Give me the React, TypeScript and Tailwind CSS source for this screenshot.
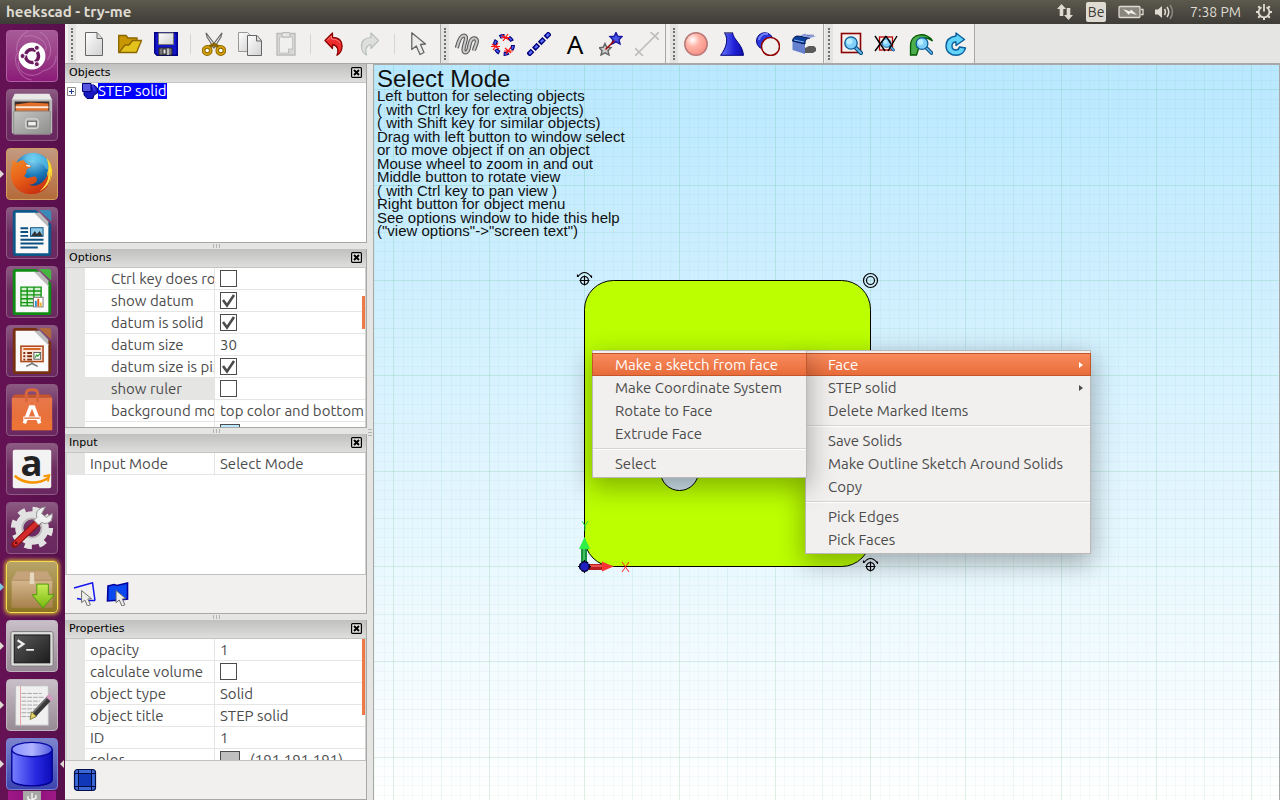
import React from "react";

type Children = { children?: React.ReactNode };

/* ---------- toolbar icons (24 x 24) ---------- */

function Icon({ children }: Children) {
  return (
    <svg viewBox="0 0 24 24" className="size-6 shrink-0" aria-hidden="true">
      {children}
    </svg>
  );
}

const NewIcon = () => (
  <Icon>
    <path d="M3.5 .5H15l5.500 6V23.500H3.500Z" fill="url(#paper)" stroke="#666" />
    <path d="M15 .8V6.500H20.300" fill="#ddd" stroke="#666" />
  </Icon>
);
const OpenIcon = () => (
  <Icon>
    <path d="M.7 20.500V3.500H8L10 6H19V10" fill="#c89600" stroke="#8a6500" strokeWidth="1.300" />
    <path d="M1 20.500 7 13H11L14.500 8.500H23.500L18.500 20.500Z" fill="#e3c21c" stroke="#8a6500" strokeWidth="1.300" />
  </Icon>
);
const SaveIcon = () => (
  <Icon>
    <path d="M.7 .7H23.300V23.300H3L.7 21Z" fill="#1414c8" stroke="#000080" strokeWidth="1.400" />
    <path d="M4.500 1H19.500V12.500H4.500Z" fill="url(#paper)" stroke="#777" />
    <path d="M5 16H18V23H5Z" fill="#777" stroke="#222" />
    <path d="M9 17H12V22H9Z" fill="#e6e6e6" stroke="#333" />
    <path d="M14 16.500V23" stroke="#bbb" strokeWidth="2" />
  </Icon>
);
const CutIcon = () => (
  <Icon>
    <path d="M4 .8 14 14 12 16 5 5Z" fill="#eee" stroke="#666" strokeWidth="1.100" />
    <path d="M20 .8 10 14 12 16 19 5Z" fill="#eee" stroke="#666" strokeWidth="1.100" />
    <path d="M7 15 12 12.500 17 15" fill="none" stroke="#8a6500" strokeWidth="3.500" />
    <circle cx="5.200" cy="18.500" r="3.600" fill="#fff" stroke="#8a6500" strokeWidth="3.600" />
    <circle cx="18.800" cy="18.500" r="3.600" fill="#fff" stroke="#8a6500" strokeWidth="3.600" />
    <circle cx="5.200" cy="18.500" r="3.600" fill="none" stroke="#d4a00c" strokeWidth="1.800" />
    <circle cx="18.800" cy="18.500" r="3.600" fill="none" stroke="#d4a00c" strokeWidth="1.800" />
  </Icon>
);
const CopyIcon = () => (
  <Icon>
    <path d="M.5 .5H9.500L13 4V19.500H.5Z" fill="url(#paper)" stroke="#999" />
    <path d="M9.500 3.500H19L23.500 8.500V23.500H9.500Z" fill="url(#paper)" stroke="#666" />
    <path d="M18.500 4V9H23" fill="#ddd" stroke="#666" />
  </Icon>
);
const PasteIcon = () => (
  <Icon>
    <path d="M3 1.500H21V23H3Z" fill="#d8d8d6" stroke="#bbb" strokeWidth="1.400" />
    <path d="M5.500 5H18.500V17L15 21H5.500Z" fill="#f0f0ee" stroke="#c4c4c2" />
    <path d="M14.500 21V17H18.500" fill="#ddd" stroke="#bbb" />
    <rect x="8" y=".6" width="8" height="4.500" rx="1" fill="#e6e6e4" stroke="#b6b6b4" />
  </Icon>
);
const UndoIcon = () => (
  <Icon>
    <path
      d="M3 8.500 10.500 1V5.500C17 5.500 20.500 9 20 15 19.700 18.500 18 21.500 15 23.300 16.800 18 16 13.500 10.500 12.500V16.500Z"
      fill="#ee2c2c"
      stroke="#8b0000"
      strokeWidth="1.300"
      strokeLinejoin="round"
    />
    <path d="M5 8.500 9.500 4V7C14 7 17 8.500 18 11" fill="none" stroke="#ff8080" />
  </Icon>
);
const RedoIcon = () => (
  <Icon>
    <path
      d="M20.500 8.500 13 1V5.500C7 5.500 3 9 3.500 15 3.800 18.500 5.500 21.500 8.500 23 7 18 7.500 13.500 13 12.500V16.500Z"
      fill="#dededc"
      stroke="#b8c0be"
      strokeWidth="1.200"
      strokeLinejoin="round"
    />
  </Icon>
);
const CursorShape = ({ x = 0, y = 0 }: { x?: number; y?: number }) => (
  <path
    transform={`translate(${x} ${y})`}
    d="M.8 .8V17.500L5.300 14 9 22.500 13 20.500 9.500 12.500 14.500 12Z"
    fill="#ececea"
    stroke="#666"
    strokeWidth="1.300"
    strokeLinejoin="round"
  />
);
const SelectIcon = () => (
  <Icon>
    <CursorShape x={5} y={0} />
  </Icon>
);
const WAVE = "M1.800 16C3 11 5 3.500 9 3.500 12.500 4 10.500 9 9.500 12.500 8 17.500 8 20.500 10.800 20.500 14.500 20 13.500 14 15.500 9.500 17.500 5 22.500 5.500 21.800 10 21.300 13 19.500 15 19 18.500";
const SketchIcon = () => (
  <Icon>
    <path d={WAVE} fill="none" stroke="#5a5a5a" strokeWidth="4.200" />
    <path d={WAVE} fill="none" stroke="#cacaca" strokeWidth="2" />
  </Icon>
);
const CircleSketchIcon = () => (
  <Icon>
    <circle cx="13" cy="13" r="9" fill="none" stroke="#00007a" strokeWidth="4" strokeDasharray="5 4.420" />
    <circle cx="13" cy="13" r="9" fill="none" stroke="#4c5cf0" strokeWidth="1.800" strokeDasharray="3 6.420" strokeDashoffset="-1" />
    <path d="M11 3 18 8M17 2 12 9M10 5.500H19M1 12 8 17M7 11 2 18M0 14.500H9M14 16 20 21M20 15 15 22M13 19H22" stroke="#ff1010" strokeWidth="1.200" />
  </Icon>
);
const LineSketchIcon = () => (
  <Icon>
    <path d="M1 23 23 1" stroke="#00007a" strokeWidth="5" strokeDasharray="6.500 1.700" />
    <path d="M2.200 21.800 23 1" stroke="#6070ff" strokeWidth="2.400" strokeDasharray="3.500 4.700" />
  </Icon>
);
const TextIcon = () => (
  <span className="font-['Noto_Sans',sans-serif] text-[26px] leading-6 text-black">A</span>
);
const STAR = "M0-6 1.800-2.200 6-1.900 3 1.200 4 5.500 0 3.400-4 5.500-3 1.200-6-1.900-1.800-2.200Z";
const StarsIcon = () => (
  <Icon>
    <path transform="translate(6 17.500)" d={STAR} fill="#ccc" stroke="#666" strokeWidth="1.400" />
    <path transform="translate(17 6.500)" d={STAR} fill="#4a55e8" stroke="#1818a0" strokeWidth="1.400" />
    <path d="M6.500 17.500 15.500 8.500" stroke="#a00000" strokeWidth="1.500" />
  </Icon>
);
const DimensionIcon = () => (
  <Icon>
    <path d="M0 16 8 24M8 16 0 24M15.500 0 24 8M24 0 16 8M4 20 20 4" stroke="#bdbdbb" strokeWidth="1.700" />
  </Icon>
);
const SphereIcon = () => (
  <Icon>
    <circle cx="12" cy="12" r="11.200" fill="url(#ball)" stroke="#b87878" strokeWidth="1.500" />
  </Icon>
);
const LoftIcon = () => (
  <Icon>
    <path d="M4.500 .7H12.500C13.500 8 22.500 12 23.500 23.300H.6C6 16 9 8 4.500 .7Z" fill="url(#bluefade)" stroke="#000080" />
    <path d="M4.500 .8H12" stroke="#888" />
  </Icon>
);
const CutSolidIcon = () => (
  <Icon>
    <circle cx="8.800" cy="9" r="8.300" fill="#2c38dc" stroke="#000080" />
    <path d="M3 8A7 7 0 0 1 12 2" fill="none" stroke="#7080ff" strokeWidth="2" />
    <circle cx="14.500" cy="14.500" r="9" fill="#f1f0ee" stroke="#900000" strokeWidth="1.500" />
  </Icon>
);
const FilletIcon = () => (
  <Icon>
    <path d="M13 16 17 14H22L24 16V19L21 21H13Z" fill="#5a5a5a" />
    <path d="M.5 8.500 13 10V22L.5 18Z" fill="#6680d0" />
    <path d="M.5 9C1 5.500 3 4 6 4L18 6C14.500 6.500 13 8 13 12Z" fill="#0c3f9a" stroke="#001850" />
    <path d="M2 8 12 10" stroke="#7fb0f0" />
    <path d="M8 3.500 13 1.500 15 2.800 24 4.500 18 6Z" fill="#8c9cdc" />
    <path d="M15 3.200H22" stroke="#5060a8" strokeWidth=".8" />
  </Icon>
);
const Magnifier = ({ x, y, s = 1 }: { x: number; y: number; s?: number }) => (
  <g transform={`translate(${x} ${y}) scale(${s})`}>
    <path d="M4.500 4.500 10 10" stroke="#0a4a80" strokeWidth="4" strokeLinecap="round" />
    <path d="M5 5 10 10" stroke="#62b8e8" strokeWidth="1.800" strokeLinecap="round" />
    <circle r="6.200" fill="#7fd0fa" stroke="#0a5a94" strokeWidth="1.300" />
    <circle cx="-1.500" cy="-1.500" r="3" fill="#b8ecff" />
  </g>
);
const ZoomWindowIcon = () => (
  <Icon>
    <rect x="2.500" y="1.500" width="19" height="19" fill="#f6f0ee" stroke="#8b0000" strokeWidth="1.600" />
    <Magnifier x={12} y={11} />
  </Icon>
);
const ZoomExtentsIcon = () => (
  <Icon>
    <rect x="5.500" y="5" width="13" height="13" fill="none" stroke="#c00000" strokeWidth="1.300" />
    <Magnifier x={12.500} y={11} s={0.7} />
    <path d="M1 4 11 19M12 4 1 19M12 4 17 12M23 4 14 19" stroke="#000" strokeWidth="1.400" fill="none" />
  </Icon>
);
const ZoomBackIcon = () => (
  <Icon>
    <path d="M1.500 23V14C1.500 0 19 0 23.500 9 18 4 8 5 8 15H10L7.500 23Z" fill="#4cae4c" stroke="#005800" strokeWidth="1.300" />
    <Magnifier x={13} y={11.5} s={0.95} />
  </Icon>
);
const RefreshIcon = () => (
  <Icon>
    <path
      d="M12 1V4C5 5 2 9 2 14 2 20 7 23.300 12 23.300 17 23.300 20.500 20 21.500 16L15.500 15C15 17 13.500 18 12 18 9.500 18 8 16.500 8 14 8 11.500 9.500 10 12 10V13.500L20.500 7.500Z"
      fill="#62d4fa"
      stroke="#0c5f9c"
      strokeWidth="1.400"
      strokeLinejoin="round"
    />
  </Icon>
);

/* ---------- launcher icons (52 x 52) ---------- */

function Tile({ children }: Children) {
  return (
    <svg viewBox="0 0 52 52" className="block size-full" aria-hidden="true">
      {children}
    </svg>
  );
}

const DashIcon = () => (
  <Tile>
    <path d="M11 24C8 14 12 6 22 0M40 20C44 12 30 2 18 6M42 30C50 20 42 4 34 1M12 32C10 44 26 50 36 43M10 24C6 34 14 50 26 51M36 42C46 40 51 34 51 26" fill="none" stroke="#d69ccb" strokeWidth="1.200" opacity=".4" />
    <circle cx="26" cy="26" r="14" fill="#fff" />
    <circle cx="26" cy="26" r="6.800" fill="none" stroke="#6c1b5e" strokeWidth="3.600" strokeDasharray="12.700 1.540" strokeDashoffset="5.500" />
    <circle cx="16.200" cy="26" r="2.600" fill="#6c1b5e" stroke="#fff" />
    <circle cx="31" cy="17.500" r="2.600" fill="#6c1b5e" stroke="#fff" />
    <circle cx="31" cy="34.500" r="2.600" fill="#6c1b5e" stroke="#fff" />
  </Tile>
);
const FilesIcon = () => (
  <Tile>
    <path d="M8 5H44L47 10V45H5V10Z" fill="#b9b9b7" />
    <path d="M8 4H44L46.500 10H5.500Z" fill="#e8e8e6" />
    <path d="M8 12H44V24H8Z" fill="#3c2c28" />
    <path d="M9 15 24 13 43 14V24H9Z" fill="#e0702c" />
    <path d="M9 17H43V19H9Z" fill="#fbe8d8" />
    <path d="M7 22H45V46H7Z" fill="url(#steel)" stroke="#8c8c8a" />
    <rect x="19.500" y="30" width="13" height="10" rx="2" fill="#b6b6b4" stroke="#ddd" />
    <rect x="21.500" y="32.500" width="9" height="5" fill="#eee" stroke="#555" />
  </Tile>
);
const FirefoxIcon = () => (
  <Tile>
    <circle cx="27" cy="24" r="20" fill="url(#globe)" />
    <path d="M18 10C24 4 38 4 43 13 46 18 44 24 40 20 38 14 32 15 28 12 24 10 20 14 18 10Z" fill="#5cc6ec" opacity=".6" />
    <path d="M41 9C50 18 49 34 38 42 34 45 30 46 25 46 36 41 42 34 42 24 44 21 43 14 41 9Z" fill="#ffd628" />
    <path d="M6 11C8 13 9 14 11 14 13 12 16 11 18 12 18 14 20 15 25 18 25 20 21 20 20 22 21 25 19 26 18 28 21 33 27 27 30 29 33 32 30 37 23 37 31 42 43 32 44 21 49 34 40 47 25 47 12 47 4 37 4 26 4 20 6 16 6 11Z" fill="url(#fox)" />
    <path d="M44 18C48 30 43 40 34 44 40 38 43 34 43 26Z" fill="#ffe24a" />
    <path d="M20 17 24 18" stroke="#fff" strokeWidth="1.500" />
  </Tile>
);
const OfficeIcon = ({ dark, light, children }: { dark: string; light: string; children: React.ReactNode }) => (
  <Tile>
    <path d="M9 2H30L46 17V47Q46 50 43 50H9Q6 50 6 47V5Q6 2 9 2Z" fill={dark} />
    <path d="M9 5H29L43 19V47H9Z" fill="#fafafa" />
    <path d="M28 5 43 20V14L34 5Z" fill="#bbb" />
    <path d="M33 2H43Q46 2 46 5V14Z" fill={light} />
    {children}
  </Tile>
);
const WriterIcon = () => (
  <OfficeIcon dark="#0c5788" light="#3a8ab8">
    <path d="M14 21H22M14 25H22M14 29H22M14 33H38M14 37H38M14 41H32" stroke="#0c5080" strokeWidth="2" />
    <rect x="24.500" y="20.500" width="13" height="9" fill="#8ccbe8" stroke="#0c5080" />
    <path d="M25 29 29 24 31 27 34 24 37 29Z" fill="#333" />
  </OfficeIcon>
);
const CalcIcon = () => (
  <OfficeIcon dark="#0e8c14" light="#46b440">
    <path d="M14.500 21H35.500V40.500H14.500ZM14.500 25H35.500M14.500 29H35.500M14.500 33H35.500M14.500 37H35.500M21 21V40.500M28 21V40.500" fill="#d4f0d0" stroke="#129412" strokeWidth="1.400" />
    <rect x="27.500" y="31.500" width="10" height="10" fill="#fff" stroke="#777" />
    <path d="M30 35V41" stroke="#3090d0" strokeWidth="2" />
    <path d="M32.500 33V41" stroke="#e06020" strokeWidth="2" />
    <path d="M35 37V41" stroke="#e8b020" strokeWidth="2" />
  </OfficeIcon>
);
const ImpressIcon = () => (
  <OfficeIcon dark="#783010" light="#b0683c">
    <rect x="14.500" y="21" width="23" height="16" fill="#fbe6da" stroke="#b04818" strokeWidth="1.600" />
    <path d="M17 24H35" stroke="#d86828" strokeWidth="2" />
    <path d="M17 28H19M17 31.500H19M17 35H19M21 28H26M21 31.500H26M21 35H26" stroke="#803010" strokeWidth="2" />
    <rect x="28" y="27.500" width="7" height="7" fill="#fff" stroke="#555" />
    <path d="M29 33 31 30 32 31.500 34.500 28.500" fill="none" stroke="#30a030" strokeWidth="1.200" />
    <path d="M26 37V39L20 42M26 39 32 42" stroke="#777" strokeWidth="1.600" fill="none" />
  </OfficeIcon>
);
const SoftwareIcon = () => (
  <Tile>
    <path d="M5 13H47V47H5Z" fill="url(#bag)" />
    <path d="M5 37H47V47H5Z" fill="#f07838" opacity=".6" />
    <path d="M5 13 8 10H44L47 13Z" fill="#c8562a" />
    <path d="M20 18V9Q20 5 26 5 32 5 32 9V18" fill="none" stroke="#d8683c" strokeWidth="3" />
    <path d="M18 40 24.500 23H27.500L34 40" fill="none" stroke="#fff" strokeWidth="3.800" />
    <path d="M17 34.500H35" stroke="#fff" strokeWidth="3.600" />
    <path d="M18 34.500H34" stroke="#e86028" strokeWidth="1.200" />
  </Tile>
);
const AmazonIcon = () => (
  <Tile>
    <rect x="6" y="6" width="40" height="40" rx="2" fill="#f3f3f3" />
    <text x="25.500" y="33" textAnchor="middle" fill="#222" className="font-['Open_Sans',sans-serif] text-[38px] font-bold">
      a
    </text>
    <path d="M8 33C18 42 33 42 43 35" fill="none" stroke="#f79400" strokeWidth="2.600" />
    <path d="M38 33.500 44 32.500 42.500 39" fill="none" stroke="#f79400" strokeWidth="2" />
  </Tile>
);
const SettingsIcon = () => (
  <Tile>
    <circle cx="26" cy="26" r="19" fill="none" stroke="#e2e2e2" strokeWidth="6" strokeDasharray="7.500 7.420" />
    <circle cx="26" cy="26" r="13.500" fill="none" stroke="#e2e2e2" strokeWidth="8" />
    <circle cx="26" cy="26" r="10" fill="none" stroke="#bcbcbc" strokeWidth="2" />
    <path d="M8 43 32 20" stroke="#8c1010" strokeWidth="7" strokeLinecap="round" />
    <path d="M9 42 32 20" stroke="#d42c2c" strokeWidth="5" strokeLinecap="round" />
    <path d="M32 22 28 18 31 15Q29 8 36 5L40 4 36 11 41 15 47 11Q48 19 42 21 38 22 36 20L33 23Z" fill="#f0f0f0" stroke="#909090" />
    <circle cx="9.500" cy="41.500" r="1.500" fill="#701010" />
  </Tile>
);
const InstallerIcon = () => (
  <Tile>
    <path d="M10 10H42L47 19V47H5V19Z" fill="#c4a074" />
    <path d="M10 10H42L47 19H5Z" fill="#c4a27a" />
    <path d="M5 19H47V47H5Z" fill="url(#box)" />
    <path d="M5 19H47" stroke="#a88458" strokeWidth=".8" />
    <path d="M24 11H28L28.500 23H23.500Z" fill="#e6d8be" />
    <path d="M31 23H43V34H49L37.500 48 26 34H31Z" fill="url(#lime)" stroke="#4c9a08" />
  </Tile>
);
const TerminalIcon = () => (
  <Tile>
    <rect x="4" y="11" width="44" height="36" rx="2" fill="#dcdcda" stroke="#777" />
    <rect x="7.500" y="14.500" width="37" height="29" fill="url(#screen)" stroke="#111" />
    <path d="M11 20 17 24 11 28" fill="none" stroke="#eee" strokeWidth="2.400" />
    <path d="M20 30H28" stroke="#eee" strokeWidth="2" />
  </Tile>
);
const EditorIcon = () => (
  <Tile>
    <path d="M9 6H43V47H9Z" fill="#f0f0f0" stroke="#bbb" />
    <path d="M14 6V47" stroke="#e8a0a0" />
    <path d="M15 14H36M15 18H38M15 22H34M15 26H36M15 30H32M15 34H30M15 38H26" stroke="#a8a8a8" strokeDasharray="5 1" />
    <path d="M44 19 28 36" stroke="#3a3a3a" strokeWidth="6" />
    <path d="M42 18 27 34" stroke="#777" strokeWidth="1.500" />
    <path d="M46 17 43 20" stroke="#d49ac0" strokeWidth="7" />
    <path d="M25.500 33 30.500 38 24 41Z" fill="#e8d06a" stroke="#777a30" />
  </Tile>
);
const CylinderIcon = () => (
  <Tile>
    <path d="M5 11V42C5 51 47 51 47 42V11Z" fill="url(#cyl)" stroke="#000090" strokeWidth="1.400" />
    <ellipse cx="26" cy="11" rx="21" ry="7.500" fill="url(#cyltop)" stroke="#0808a0" strokeWidth="1.400" />
  </Tile>
);

function Gradients() {
  return (
    <svg className="absolute size-0" aria-hidden="true">
      <defs>
        <linearGradient id="paper" x2="1" y2="1"><stop stopColor="#fff" /><stop offset="1" stopColor="#d0d0d0" /></linearGradient>
        <radialGradient id="ball" cx=".35" cy=".32" r=".75"><stop stopColor="#fff" /><stop offset=".4" stopColor="#ffb4a8" /><stop offset="1" stopColor="#f58c80" /></radialGradient>
        <linearGradient id="bluefade"><stop stopColor="#6878f8" /><stop offset=".6" stopColor="#2020d8" /><stop offset="1" stopColor="#1010a8" /></linearGradient>
        <linearGradient id="steel" x2="1" y2="1"><stop stopColor="#c4c4c2" /><stop offset="1" stopColor="#8e8e8c" /></linearGradient>
        <radialGradient id="globe" cx=".5" cy=".15" r=".9"><stop stopColor="#8adcf6" /><stop offset=".5" stopColor="#1a78b8" /><stop offset="1" stopColor="#0a2060" /></radialGradient>
        <linearGradient id="fox" x2=".6" y2="1"><stop stopColor="#f08828" /><stop offset=".5" stopColor="#e86018" /><stop offset="1" stopColor="#c83010" /></linearGradient>
        <linearGradient id="bag" x2="0" y2="1"><stop stopColor="#e8784c" /><stop offset="1" stopColor="#e86c30" /></linearGradient>
        <linearGradient id="box" x2="0" y2="1"><stop stopColor="#d4b68c" /><stop offset="1" stopColor="#a8824e" /></linearGradient>
        <linearGradient id="lime" x2="0" y2="1"><stop stopColor="#c8ec58" /><stop offset="1" stopColor="#78b810" /></linearGradient>
        <linearGradient id="screen" x2="1" y2="1"><stop stopColor="#5a5a5a" /><stop offset="1" stopColor="#1c1c1c" /></linearGradient>
        <linearGradient id="cyl"><stop stopColor="#7880ff" /><stop offset=".6" stopColor="#2828e0" /><stop offset="1" stopColor="#0c0cb8" /></linearGradient>
        <linearGradient id="cyltop"><stop stopColor="#8890ff" /><stop offset=".5" stopColor="#b0b4ff" /><stop offset="1" stopColor="#5058e0" /></linearGradient>
      </defs>
    </svg>
  );
}

/* ---------- top panel ---------- */

function TopPanel() {
  return (
    <header className="flex h-6 shrink-0 items-center justify-between bg-linear-to-b from-[#5c594d] to-[#3e3c37] pr-[7px] pl-1.5 text-[#dfdbd2]">
      <h1 className="text-[15px] leading-6 font-bold">heekscad - try-me</h1>
      <div className="flex items-center text-sm leading-6">
        <svg viewBox="0 0 18 18" className="mr-3 size-[18px]" aria-label="Network">
          <path d="M5.500 1 10 6H7.300V13H3.700V6H1ZM12.500 17 8 12H10.700V5H14.300V12H17Z" fill="#dfdbd2" />
        </svg>
        <span className="mr-3 flex size-5 items-center justify-center rounded-xs bg-[#dfdbd2] text-sm text-[#3c3b37]">Be</span>
        <svg viewBox="0 0 26 14" className="mr-2.5 h-3.5 w-[26px]" aria-label="Battery">
          <rect x="1" y="1.500" width="21" height="11" rx="1" fill="#8a877f" stroke="#dfdbd2" strokeWidth="1.300" />
          <path d="M23 4.500H25V9.500H23" fill="none" stroke="#dfdbd2" strokeWidth="1.300" />
          <path d="M5 4 12 6.500 13 4.500 19 10 12 8 11 10Z" fill="#f4f1ea" />
        </svg>
        <svg viewBox="0 0 20 16" className="mr-4 h-4 w-5" aria-label="Volume">
          <path d="M1 5.500H4L8 2V14L4 10.500H1Z" fill="#dfdbd2" />
          <path d="M10.500 5Q12.500 8 10.500 11M13 3Q16.500 8 13 13" fill="none" stroke="#dfdbd2" strokeWidth="1.500" />
          <path d="M16 1Q21 8 16 15" fill="none" stroke="#8a877f" strokeWidth="1.500" />
        </svg>
        <time className="mr-3.5">7:38 PM</time>
        <svg viewBox="0 0 18 18" className="size-[18px]" aria-label="Session">
          <path d="M11.500 4.200A5.400 5.400 0 1 1 6.500 4.200" fill="none" stroke="#dfdbd2" strokeWidth="1.800" />
          <path d="M9 14.500V17M14.500 9H17M1 9H3.500M3.200 3.200 5 5M14.800 3.200 13 5M3.200 14.800 5 13M14.800 14.800 13 13" stroke="#dfdbd2" strokeWidth="2" />
          <path d="M9 1V8.500" stroke="#dfdbd2" strokeWidth="1.800" />
        </svg>
      </div>
    </header>
  );
}

/* ---------- launcher ---------- */

const PLUM = "border-[#8d5a82] bg-linear-to-b from-[#8b5a82] via-[#6c2c60] to-[#6a2860]";
const GREY = "border-[#c0b4be] bg-linear-to-b from-[#c9bfc8] to-[#978b96]";

type LauncherItem = { name: string; icon: React.ReactNode; tile: string; running?: string; focused?: boolean };

const launcherItems: LauncherItem[] = [
  { name: "Dash", icon: <DashIcon />, tile: "border-[#b060a2] bg-linear-to-b from-[#a65a98] to-[#8c1a78]" },
  { name: "Files", icon: <FilesIcon />, tile: PLUM },
  { name: "Firefox", icon: <FirefoxIcon />, tile: "border-[#d0a060] bg-linear-to-b from-[#c39a80] to-[#b56a38]", running: "border-l-[#dfdbd2]" },
  { name: "Writer", icon: <WriterIcon />, tile: PLUM },
  { name: "Calc", icon: <CalcIcon />, tile: PLUM },
  { name: "Impress", icon: <ImpressIcon />, tile: PLUM },
  { name: "Software", icon: <SoftwareIcon />, tile: PLUM },
  { name: "Amazon", icon: <AmazonIcon />, tile: PLUM },
  { name: "Settings", icon: <SettingsIcon />, tile: PLUM },
  { name: "Installer", icon: <InstallerIcon />, tile: "border-[#f4dc50] bg-linear-to-b from-[#b8a468] to-[#8c7424] shadow-[0_0_4px_1px_#e8c830]", running: "border-l-[#7cc8ee]" },
  { name: "Terminal", icon: <TerminalIcon />, tile: GREY, running: "border-l-[#dfdbd2]" },
  { name: "Text Editor", icon: <EditorIcon />, tile: GREY, running: "border-l-[#dfdbd2]" },
  { name: "HeeksCAD", icon: <CylinderIcon />, tile: "border-[#7880d8] bg-linear-to-b from-[#7c84cc] to-[#3c44b0]", running: "border-l-[#dfdbd2]", focused: true },
];

function Launcher() {
  return (
    <nav aria-label="Launcher" className="flex w-[65px] shrink-0 flex-col gap-[7px] overflow-hidden bg-linear-to-r from-[#651254] via-[#5e1150] to-[#57104c] pt-1.5">
      {launcherItems.map((item) => (
        <div key={item.name} className="flex h-[52px] shrink-0 items-center">
          <span className={`w-1.5 border-y-4 border-l-4 border-transparent ${item.running ?? ""}`} />
          <button aria-label={item.name} className={`size-[52px] overflow-hidden rounded-sm border ${item.tile}`}>
            {item.icon}
          </button>
          {item.focused && <span className="ml-0.5 border-y-4 border-r-4 border-transparent border-r-[#dfdbd2]" />}
        </div>
      ))}
      <button aria-label="Removable drive" className="-mt-1.5 ml-2 h-3 w-12 shrink-0 overflow-hidden bg-linear-to-r from-[#a01888] via-[#8c1078] to-[#a01888]">
        <svg viewBox="0 0 48 12" className="block h-3 w-12" aria-hidden="true">
          <path d="M15 0H33V12H15Z" fill="#a8a8a6" />
          <path d="M24 2V12M20 5V8L24 10M28 4V7L24 9" fill="none" stroke="#f4f4f4" strokeWidth="1.400" />
        </svg>
      </button>
    </nav>
  );
}

/* ---------- toolbars ---------- */

type Tool = { label: string; icon: React.ReactNode } | null;

const fileTools: Tool[] = [
  { label: "New", icon: <NewIcon /> },
  { label: "Open", icon: <OpenIcon /> },
  { label: "Save", icon: <SaveIcon /> },
  null,
  { label: "Cut", icon: <CutIcon /> },
  { label: "Copy", icon: <CopyIcon /> },
  { label: "Paste", icon: <PasteIcon /> },
  null,
  { label: "Undo", icon: <UndoIcon /> },
  { label: "Redo", icon: <RedoIcon /> },
  null,
  { label: "Select", icon: <SelectIcon /> },
];
const sketchTools: Tool[] = [
  { label: "Sketch", icon: <SketchIcon /> },
  { label: "Circle", icon: <CircleSketchIcon /> },
  { label: "Line", icon: <LineSketchIcon /> },
  { label: "Text", icon: <TextIcon /> },
  { label: "Transform", icon: <StarsIcon /> },
  { label: "Dimension", icon: <DimensionIcon /> },
];
const solidTools: Tool[] = [
  { label: "Sphere", icon: <SphereIcon /> },
  { label: "Loft", icon: <LoftIcon /> },
  { label: "Boolean cut", icon: <CutSolidIcon /> },
  { label: "Fillet", icon: <FilletIcon /> },
];
const viewTools: Tool[] = [
  { label: "Zoom window", icon: <ZoomWindowIcon /> },
  { label: "Zoom extents", icon: <ZoomExtentsIcon /> },
  { label: "Previous view", icon: <ZoomBackIcon /> },
  { label: "Redraw", icon: <RefreshIcon /> },
];

function ToolGroup({ label, tools, className }: { label: string; tools: Tool[]; className: string }) {
  return (
    <div role="toolbar" aria-label={label} className={`flex h-full items-center border-r border-[#a8a8a6] bg-[#f1f0ee] ${className}`}>
      <span className="flex h-full w-2 shrink-0 items-center justify-center bg-[#e3e3e1]">
        <span className="h-8 border-l-2 border-dotted border-[#707070]" />
      </span>
      {tools.map((tool, i) =>
        tool ? (
          <button key={tool.label} aria-label={tool.label} className="flex h-9 w-9 items-center justify-center">
            {tool.icon}
          </button>
        ) : (
          <span key={i} className="flex w-3 shrink-0 justify-center">
            <span className="h-5 w-px bg-[#d6d6d4]" />
          </span>
        ),
      )}
    </div>
  );
}

function Toolbars() {
  return (
    <div className="flex h-10 shrink-0 items-stretch border-b border-[#a8a8a6] bg-[#e5e5e3]">
      <ToolGroup label="File" tools={fileTools} className="pr-1 pl-[3px]" />
      <ToolGroup label="Sketching" tools={sketchTools} className="" />
      <ToolGroup label="Solids" tools={solidTools} className="pr-px pl-1" />
      <ToolGroup label="Viewing" tools={viewTools} className="w-[151px] pl-px" />
    </div>
  );
}

/* ---------- docked panes ---------- */

function Caption({ title }: { title: string }) {
  return (
    <div className="flex h-[19px] shrink-0 items-start justify-between border-b border-[#c4c4c2] bg-linear-to-b from-[#c0c0be] to-[#dededc] px-1">
      <h2 className="font-['DejaVu_Sans',sans-serif] text-[11px] leading-[18px] text-black">{title}</h2>
      <button aria-label={`Close ${title}`} className="mt-[3px] size-[11px]">
        <svg viewBox="0 0 11 11" className="block size-full">
          <rect x=".6" y=".6" width="9.800" height="9.800" rx="1" fill="#e4e4e2" stroke="#000" strokeWidth="1.200" />
          <path d="M3 3 8 8M8 3 3 8" stroke="#000" strokeWidth="2" />
        </svg>
      </button>
    </div>
  );
}

function Sash() {
  return (
    <div className="flex h-1.5 shrink-0 items-center justify-center gap-[2px] bg-[#e5e5e3]">
      <span className="h-1 w-px bg-[#b4b4b2]" />
      <span className="h-1 w-px bg-[#b4b4b2]" />
      <span className="h-1 w-px bg-[#b4b4b2]" />
    </div>
  );
}

type Property = { name: string; value?: string; checked?: boolean; swatch?: string; selected?: boolean };

const options: Property[] = [
  { name: "Ctrl key does rotate", checked: false },
  { name: "show datum", checked: true },
  { name: "datum is solid", checked: true },
  { name: "datum size", value: "30" },
  { name: "datum size is pixels", checked: true },
  { name: "show ruler", checked: false, selected: true },
  { name: "background mode", value: "top color and bottom color" },
  { name: "", value: "", swatch: "bg-[#b9e8ff]" },
];
const inputs: Property[] = [{ name: "Input Mode", value: "Select Mode" }];
const properties: Property[] = [
  { name: "opacity", value: "1" },
  { name: "calculate volume", checked: false },
  { name: "object type", value: "Solid" },
  { name: "object title", value: "STEP solid" },
  { name: "ID", value: "1" },
  { name: "color", value: "(191,191,191)", swatch: "bg-[#bfbfbf]" },
];

function CheckBox({ id, on }: { id: string; on: boolean }) {
  return (
    <span className="grid size-[17px]">
      <input id={id} type="checkbox" defaultChecked={on} className="peer col-start-1 row-start-1 size-[17px] appearance-none border border-[#4c4c4c] bg-white" />
      <svg viewBox="0 0 17 17" className="pointer-events-none invisible col-start-1 row-start-1 size-[17px] peer-checked:visible">
        <path d="M3 8 7 13.500 14 3" fill="none" stroke="#4c4c4c" strokeWidth="2.600" />
      </svg>
    </span>
  );
}

function PropertyGrid({ rows, group, indent }: { rows: Property[]; group: string; indent: string }) {
  return (
    <table className="w-full table-fixed border-separate border-spacing-0 text-[15px] leading-5 text-[#4c4c4c]">
      <colgroup>
        <col className="w-[18px]" />
        <col className="w-[130px]" />
        <col />
      </colgroup>
      <tbody>
        {rows.map((row) => {
          const id = `${group}-${row.name.replaceAll(" ", "-")}`;
          return (
            <tr key={row.name} className="h-[22px]">
              <td className="bg-[#e5e5e4] p-0" />
              <th scope="row" className={`overflow-hidden border-r border-b border-[#e5e5e4] p-0 text-left font-normal whitespace-nowrap ${indent} ${row.selected ? "bg-[#e5e5e4]" : ""}`}>
                {row.checked === undefined ? row.name : <label htmlFor={id}>{row.name}</label>}
              </th>
              <td className="overflow-hidden border-b border-[#e5e5e4] p-0 pl-[5px] whitespace-nowrap">
                {row.checked !== undefined ? (
                  <CheckBox id={id} on={row.checked} />
                ) : (
                  <span className="flex items-center gap-2.5">
                    {row.swatch && <span className={`h-[17px] w-5 shrink-0 border border-[#4c4c4c] ${row.swatch}`} />}
                    {row.value}
                  </span>
                )}
              </td>
            </tr>
          );
        })}
      </tbody>
    </table>
  );
}

function Dock() {
  return (
    <aside className="flex w-[302px] shrink-0 flex-col">
      <section className="flex h-[179px] shrink-0 flex-col border-r border-b border-[#a8a8a6] bg-white">
        <Caption title="Objects" />
        <div role="tree" className="flex items-start pl-0.5">
          <button aria-label="Expand" className="mt-1 size-[9px]">
            <svg viewBox="0 0 9 9" className="block size-full">
              <path d="M.5 .5H8.500V8.500H.5Z" fill="#fff" stroke="#888" />
              <path d="M2 4.500H7M4.500 2V7" stroke="#203890" />
            </svg>
          </button>
          <div role="treeitem" className="flex items-start pl-1.5">
            <svg viewBox="0 0 16 16" className="size-4" aria-hidden="true">
              <path d="M6 2H12L15.500 5V10L12 12 11 15.500H5L2 12V6Z" fill="#1818c0" stroke="#000078" />
              <path d="M.5 .5H9V8.500H.5Z" fill="#5858e0" stroke="#000078" />
              <path d="M10.500 2 13 8" stroke="#3c3ce0" strokeWidth="2" />
            </svg>
            <span className="bg-[#0000ff] text-[15px] leading-4 text-white">STEP solid</span>
          </div>
        </div>
      </section>
      <Sash />
      <section className="flex h-[179px] shrink-0 flex-col border-r border-b border-[#a8a8a6] bg-white">
        <Caption title="Options" />
        <div className="relative min-h-0 flex-1 overflow-hidden border-r border-l-2 border-[#d2d2d0]">
          <PropertyGrid rows={options} group="options" indent="pl-[26px]" />
          <span className="absolute top-[28px] right-0 h-[33px] w-[3px] bg-[#f07746]" />
        </div>
      </section>
      <Sash />
      <section className="flex h-[180px] shrink-0 flex-col border-r border-b border-[#a8a8a6] bg-white">
        <Caption title="Input" />
        <div className="min-h-0 flex-1 overflow-hidden border-r border-l-2 border-[#d2d2d0]">
          <PropertyGrid rows={inputs} group="input" indent="pl-[5px]" />
        </div>
        <div className="flex h-[39px] shrink-0 items-center gap-2 border-t border-[#c0c0be] bg-[#f1f0ee] pl-2">
          <button aria-label="Select edges" className="size-6">
            <Icon>
              <path d="M1 6 19.500 .8 22 18.500M22 18.500H16M4 16.500 9 17.500" fill="none" stroke="#1414f0" strokeWidth="1.500" />
              <g transform="translate(8 8) scale(.72)"><CursorShape /></g>
            </Icon>
          </button>
          <button aria-label="Select faces" className="ml-px size-6">
            <Icon>
              <path d="M2 4 8 2.500 11 3.500 21.500 1V17L14 18 1.500 19Z" fill="#0c48f0" stroke="#0000a0" strokeWidth="1.600" />
              <g transform="translate(9.500 8) scale(.72)"><CursorShape /></g>
            </Icon>
          </button>
        </div>
      </section>
      <Sash />
      <section className="flex min-h-0 flex-1 flex-col border-r border-b border-[#a8a8a6] bg-white">
        <Caption title="Properties" />
        <div className="relative min-h-0 flex-1 overflow-hidden border-r border-l-2 border-[#d2d2d0]">
          <PropertyGrid rows={properties} group="properties" indent="pl-[5px]" />
          <span className="absolute top-0 right-0 h-[76px] w-[3px] bg-[#f07746]" />
        </div>
        <div className="flex h-[39px] shrink-0 items-center border-t border-[#c0c0be] bg-[#f1f0ee] pl-2">
          <button aria-label="Show face" className="size-6">
            <Icon>
              <rect x="1.500" y="1.500" width="21" height="21" rx="3" fill="#3a68d8" stroke="#00104c" strokeWidth="1.200" />
              <path d="M5.500 5.500H18.500V18.500H5.500Z" fill="#1038b8" />
              <path d="M5.500 1V23M18.500 1V23M1 5.500H23M1 18.500H23" stroke="#000c40" />
            </Icon>
          </button>
        </div>
      </section>
    </aside>
  );
}

/* ---------- drawing area ---------- */

const ORIGIN = { x: 210.5, y: 501.5 };
const UNIT = 9.533;

function GridLines() {
  const xs: number[] = [];
  const ys: number[] = [];
  for (let i = -22; i < 200; i++) xs.push(i);
  for (let i = -100; i <= 52; i++) ys.push(i);
  const shade = (i: number) => (i % 10 === 0 ? 0.14 : i % 5 === 0 ? 0.08 : 0.04);
  return (
    <g stroke="#28a050" shapeRendering="crispEdges">
      {xs.map((i) => {
        const x = ORIGIN.x + i * UNIT;
        return <path key={`x${i}`} d={`M${x} 0V1500`} opacity={shade(i)} />;
      })}
      {ys.map((i) => {
        const y = ORIGIN.y - i * UNIT;
        return <path key={`y${i}`} d={`M0 ${y}H2400`} opacity={shade(i)} />;
      })}
    </g>
  );
}

const ArcMark = ({ x, y }: { x: number; y: number }) => (
  <g transform={`translate(${x} ${y})`} fill="none" stroke="#000" strokeWidth="1.200">
    <circle r="4" />
    <path d="M-5 0H5M0-5V5M-6.500-4Q0-12 6.500-4M-7-6V-3.500M7-5V-2.500" />
  </g>
);

function Model() {
  return (
    <svg className="absolute inset-0 size-full" aria-label="Model view">
      <GridLines />
      <rect x="210.500" y="215.500" width="286" height="286" rx="29" fill="#bbff00" stroke="#000" />
      <circle cx="305.500" cy="406.500" r="19" fill="#d2e6f0" stroke="#000" />
      <ArcMark x={210.5} y={215.5} />
      <ArcMark x={496.5} y={501.5} />
      <g fill="none" stroke="#000" strokeWidth="1.200">
        <circle cx="496.500" cy="215.500" r="7" />
        <circle cx="496.500" cy="215.500" r="4" />
      </g>
      <path d="M207 500V484H213V500Z" fill="#18903c" />
      <path d="M209 500V484H211V500Z" fill="#40c060" />
      <path d="M205 484 210.500 472 216 484Z" fill="#30f048" />
      <path d="M212 499H229V505H212Z" fill="#b82020" />
      <path d="M212 500H229V502H212Z" fill="#e85050" />
      <path d="M228 496.500 239.500 501.500 228 506.500Z" fill="#f83434" />
      <path d="M204 501.500H217M210.500 495V508" stroke="#000" strokeWidth="1.200" />
      <circle cx="210.500" cy="501.500" r="4.800" fill="#2020c0" stroke="#000030" strokeWidth="1.600" strokeDasharray="3 .8" />
      <path d="M208 456 211 461 214 456M211 461V466" fill="none" stroke="#20e040" />
      <path d="M248 497 255 507M255 497 248 507" stroke="#ff2020" />
    </svg>
  );
}

const helpLines = [
  "Left button for selecting objects",
  "( with Ctrl key for extra objects)",
  "( with Shift key for similar objects)",
  "Drag with left button to window select",
  "or to move object if on an object",
  "Mouse wheel to zoom in and out",
  "Middle button to rotate view",
  "( with Ctrl key to pan view )",
  "Right button for object menu",
  "See options window to hide this help",
  '("view options"->"screen text")',
];

type MenuEntry = { label: string; active?: boolean; submenu?: boolean } | null;

const faceMenu: MenuEntry[] = [
  { label: "Make a sketch from face", active: true },
  { label: "Make Coordinate System" },
  { label: "Rotate to Face" },
  { label: "Extrude Face" },
  null,
  { label: "Select" },
];
const objectMenu: MenuEntry[] = [
  { label: "Face", active: true, submenu: true },
  { label: "STEP solid", submenu: true },
  { label: "Delete Marked Items" },
  null,
  { label: "Save Solids" },
  { label: "Make Outline Sketch Around Solids" },
  { label: "Copy" },
  null,
  { label: "Pick Edges" },
  { label: "Pick Faces" },
];

function Menu({ label, entries, className }: { label: string; entries: MenuEntry[]; className: string }) {
  return (
    <div role="menu" aria-label={label} className={`absolute flex flex-col border border-[#bab9b7] bg-[#f1f0ee] py-0.5 shadow-[0_8px_24px_2px_rgba(0,0,0,0.3)] ${className}`}>
      {entries.map((entry, i) =>
        entry ? (
          <button
            key={entry.label}
            role="menuitem"
            className={`-mx-px flex h-[23px] items-center justify-between border pr-[7px] pl-[22px] text-left text-[15px] leading-[21px] whitespace-nowrap ${
              entry.active ? "border-[#c4562c] bg-linear-to-b from-[#f88a5c] to-[#e86c3a] text-white" : "border-transparent text-[#4c4c4c]"
            }`}
          >
            {entry.label}
            {entry.submenu && <span className="border-y-[3px] border-l-[4px] border-y-transparent border-l-current" />}
          </button>
        ) : (
          <div key={i} role="separator" className="flex h-[7px] items-center">
            <span className="h-0.5 w-full border-t border-[#d6d5d3] bg-white" />
          </div>
        ),
      )}
    </div>
  );
}

function Viewport() {
  return (
    <main className="relative min-w-0 flex-1 overflow-hidden border-t border-r border-l border-[#a8a8a6] bg-linear-to-b from-[#b9e8ff] to-white">
      <Model />
      <div className="relative pt-[3px] pl-[3px] font-['Liberation_Sans',Arial,sans-serif] text-[#111]">
        <h2 className="text-2xl leading-[22px]">Select Mode</h2>
        <div className="flex h-[147px] flex-col justify-between text-[15px] leading-3">
          {helpLines.map((line) => (
            <p key={line}>{line}</p>
          ))}
        </div>
      </div>
      <Menu label="Object menu" entries={objectMenu} className="top-[285px] left-[431px] w-[286px]" />
      <Menu label="Face menu" entries={faceMenu} className="top-[285px] left-[218px] w-[215px]" />
    </main>
  );
}

export default function App() {
  return (
    <div className="flex h-screen flex-col overflow-hidden bg-[#e5e5e3] font-['Ubuntu','Noto_Sans',sans-serif]">
      <Gradients />
      <TopPanel />
      <div className="flex min-h-0 flex-1">
        <Launcher />
        <div className="flex min-w-0 flex-1 flex-col">
          <Toolbars />
          <div className="flex min-h-0 flex-1">
            <Dock />
            <div className="flex w-1.5 shrink-0 flex-col items-center justify-center gap-0.5">
              <span className="h-px w-1 bg-[#b4b4b2]" />
              <span className="h-px w-1 bg-[#b4b4b2]" />
              <span className="h-px w-1 bg-[#b4b4b2]" />
            </div>
            <Viewport />
          </div>
        </div>
      </div>
    </div>
  );
}
